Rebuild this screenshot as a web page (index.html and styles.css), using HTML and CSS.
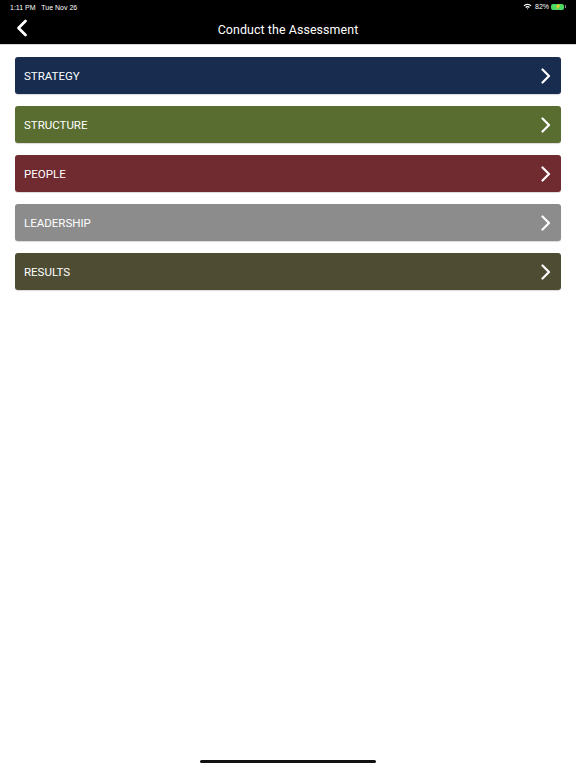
FILE: index.html
```html
<!DOCTYPE html>
<html>
<head>
<meta charset="utf-8">
<link rel="stylesheet" href="styles.css">
</head>
<body>
<div class="screen">
  <header class="top">
    <div class="status">
      <span class="time">1:11 PM&nbsp;&nbsp; Tue Nov 26</span>
      <span class="right">
        <svg class="wifi" width="9" height="7" viewBox="0 0 9 7"><path d="M0.5 2.4 A5.5 5.5 0 0 1 8.5 2.4 L7.6 3.3 A4.2 4.2 0 0 0 1.4 3.3 Z M2.2 4.1 A3 3 0 0 1 6.8 4.1 L5.9 5 A1.8 1.8 0 0 0 3.1 5 Z M3.8 5.7 A1 1 0 0 1 5.2 5.7 L4.5 6.5 Z" fill="#fff"/></svg>
        <span class="pct">82%</span>
        <span class="batt"><span class="fill">⚡</span></span><span class="nub"></span>
      </span>
    </div>
    <div class="nav">
      <svg class="back" width="14" height="18" viewBox="0 0 14 18"><path d="M10.5 2 L3.5 9 L10.5 16" fill="none" stroke="#fff" stroke-width="2.8" stroke-linecap="round" stroke-linejoin="round"/></svg>
      <h1 class="title">Conduct the Assessment</h1>
    </div>
  </header>
  <main class="list">
    <a class="row strategy"><span>STRATEGY</span><svg class="chev" width="12" height="16" viewBox="0 0 12 16"><path d="M2.5 1.5 L9 8 L2.5 14.5" fill="none" stroke="#fff" stroke-width="2.2" stroke-linecap="round" stroke-linejoin="round"/></svg></a>
    <a class="row structure"><span>STRUCTURE</span><svg class="chev" width="12" height="16" viewBox="0 0 12 16"><path d="M2.5 1.5 L9 8 L2.5 14.5" fill="none" stroke="#fff" stroke-width="2.2" stroke-linecap="round" stroke-linejoin="round"/></svg></a>
    <a class="row people"><span>PEOPLE</span><svg class="chev" width="12" height="16" viewBox="0 0 12 16"><path d="M2.5 1.5 L9 8 L2.5 14.5" fill="none" stroke="#fff" stroke-width="2.2" stroke-linecap="round" stroke-linejoin="round"/></svg></a>
    <a class="row leadership"><span>LEADERSHIP</span><svg class="chev" width="12" height="16" viewBox="0 0 12 16"><path d="M2.5 1.5 L9 8 L2.5 14.5" fill="none" stroke="#fff" stroke-width="2.2" stroke-linecap="round" stroke-linejoin="round"/></svg></a>
    <a class="row results"><span>RESULTS</span><svg class="chev" width="12" height="16" viewBox="0 0 12 16"><path d="M2.5 1.5 L9 8 L2.5 14.5" fill="none" stroke="#fff" stroke-width="2.2" stroke-linecap="round" stroke-linejoin="round"/></svg></a>
  </main>
  <div class="home"></div>
</div>
</body>
</html>
```
FILE: styles.css
```css
html, body {
  margin: 0;
  padding: 0;
  background: #fff;
}
.screen {
  width: 576px;
  height: 768px;
  display: flex;
  flex-direction: column;
  font-family: Roboto, "Liberation Sans", sans-serif;
  overflow: hidden;
}
.top {
  background: #000;
  height: 44px;
  border-bottom: 1px solid #d4d4d4;
  display: flex;
  flex-direction: column;
}
.status {
  height: 13px;
  display: flex;
  justify-content: space-between;
  align-items: center;
  padding: 0 10px 0 10px;
  color: #fff;
  font-size: 7px;
  font-family: "Liberation Sans", sans-serif;
}
.time {
  padding-top: 1px;
}
.right {
  display: flex;
  align-items: center;
  gap: 2px;
}
.wifi {
  margin-right: 1px;
}
.batt {
  width: 13px;
  height: 6px;
  border-radius: 2px;
  background: #4cd964;
  display: flex;
  align-items: center;
  justify-content: center;
}
.fill {
  font-size: 5px;
  color: #000;
  line-height: 1;
}
.nub {
  width: 1px;
  height: 3px;
  background: #888;
  margin-left: -1px;
}
.nav {
  flex: 1;
  display: flex;
  align-items: center;
  justify-content: center;
  position: relative;
}
.back {
  position: absolute;
  left: 15px;
  top: 6px;
}
.title {
  margin: 0;
  color: #fff;
  font-size: 12.4px;
  font-weight: 400;
  letter-spacing: 0.1px;
  padding-top: 1px;
}
.list {
  display: flex;
  flex-direction: column;
  gap: 12px;
  padding: 12px 15px 0 15px;
}
.row {
  height: 37px;
  border-radius: 3px;
  display: flex;
  align-items: center;
  justify-content: space-between;
  padding: 0 9px 0 9px;
  color: #fff;
  font-size: 11.5px;
  box-shadow: 0 1px 1px rgba(0,0,0,0.15);
}
.strategy { background: #172c4f; }
.structure { background: #5a6d30; }
.people { background: #6f2b30; }
.leadership { background: #8c8c8c; }
.results { background: #4e4d33; }
.home {
  margin-top: auto;
  margin-bottom: 5px;
  align-self: center;
  width: 176px;
  height: 3px;
  border-radius: 2px;
  background: #111;
}
```
